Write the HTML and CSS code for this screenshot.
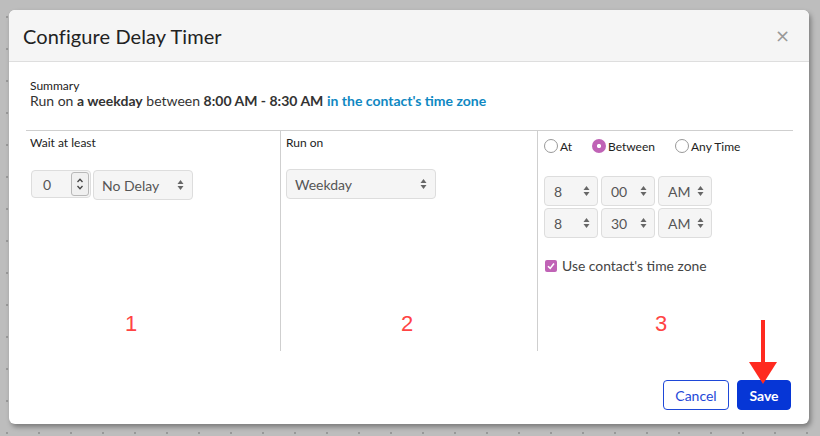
FILE: index.html
```html
<!DOCTYPE html>
<html>
<head>
<meta charset="utf-8">
<link rel="stylesheet" href="styles.css">
</head>
<body>
<div class="modal">
  <div class="modal-header">
    <h1 class="title">Configure Delay Timer</h1>
    <span class="close">×</span>
  </div>
  <div class="modal-body">
    <div class="summary">
      <div class="summary-label">Summary</div>
      <div class="summary-text">Run on <b>a weekday</b> between <b>8:00 AM - 8:30 AM</b> <b class="link">in the contact's time zone</b></div>
    </div>
    <div class="columns">
      <div class="col">
        <div class="col-label">Wait at least</div>
        <div class="controls">
          <div class="num-input">
            <span class="num-val">0</span>
            <span class="spin">
              <svg width="8" height="18" viewBox="0 0 8 18"><path d="M1.5 7 L4 4.2 L6.5 7" fill="none" stroke="#444" stroke-width="1.3"/><path d="M1.5 11 L4 13.8 L6.5 11" fill="none" stroke="#444" stroke-width="1.3"/></svg>
            </span>
          </div>
          <div class="select w-delay"><span>No Delay</span><svg class="arr" width="7" height="12" viewBox="0 0 7 12"><path d="M3.5 1 L6.5 5 H0.5Z M3.5 11 L6.5 7 H0.5Z" fill="#666"/></svg></div>
        </div>
      </div>
      <div class="col">
        <div class="col-label">Run on</div>
        <div class="controls">
          <div class="select w-day"><span>Weekday</span><svg class="arr" width="7" height="12" viewBox="0 0 7 12"><path d="M3.5 1 L6.5 5 H0.5Z M3.5 11 L6.5 7 H0.5Z" fill="#666"/></svg></div>
        </div>
      </div>
      <div class="col">
        <div class="radios">
          <label class="radio"><span class="dot"></span>At</label>
          <label class="radio"><span class="dot on"></span>Between</label>
          <label class="radio"><span class="dot"></span>Any Time</label>
        </div>
        <div class="time-grid">
          <div class="select sm"><span>8</span><svg class="arr" width="7" height="12" viewBox="0 0 7 12"><path d="M3.5 1 L6.5 5 H0.5Z M3.5 11 L6.5 7 H0.5Z" fill="#666"/></svg></div>
          <div class="select sm"><span>00</span><svg class="arr" width="7" height="12" viewBox="0 0 7 12"><path d="M3.5 1 L6.5 5 H0.5Z M3.5 11 L6.5 7 H0.5Z" fill="#666"/></svg></div>
          <div class="select sm"><span>AM</span><svg class="arr" width="7" height="12" viewBox="0 0 7 12"><path d="M3.5 1 L6.5 5 H0.5Z M3.5 11 L6.5 7 H0.5Z" fill="#666"/></svg></div>
          <div class="select sm"><span>8</span><svg class="arr" width="7" height="12" viewBox="0 0 7 12"><path d="M3.5 1 L6.5 5 H0.5Z M3.5 11 L6.5 7 H0.5Z" fill="#666"/></svg></div>
          <div class="select sm"><span>30</span><svg class="arr" width="7" height="12" viewBox="0 0 7 12"><path d="M3.5 1 L6.5 5 H0.5Z M3.5 11 L6.5 7 H0.5Z" fill="#666"/></svg></div>
          <div class="select sm"><span>AM</span><svg class="arr" width="7" height="12" viewBox="0 0 7 12"><path d="M3.5 1 L6.5 5 H0.5Z M3.5 11 L6.5 7 H0.5Z" fill="#666"/></svg></div>
        </div>
        <label class="check"><span class="box"><svg width="10" height="10" viewBox="0 0 10 10"><path d="M2 5.2 L4.2 7.4 L8 2.6" fill="none" stroke="#fff" stroke-width="1.6"/></svg></span>Use contact's time zone</label>
      </div>
    </div>
  </div>
  <div class="modal-footer">
    <button class="btn btn-cancel">Cancel</button>
    <button class="btn btn-save">Save</button>
  </div>
  <span class="anno a1">1</span>
  <span class="anno a2">2</span>
  <span class="anno a3">3</span>
  <svg class="arrow" width="28" height="66" viewBox="0 0 28 66"><rect x="12" y="0" width="4" height="46" fill="#ff2a1f"/><path d="M0 42 H28 L14 64 Z" fill="#ff2a1f"/></svg>
</div>
</body>
</html>
```

FILE: styles.css
```css
html, body {
  margin: 0;
  padding: 0;
}
body {
  width: 820px;
  height: 436px;
  overflow: hidden;
  background-color: #bdbdbd;
  background-image: radial-gradient(circle at 1px 1px, #999 1.2px, transparent 1.4px);
  background-size: 32px 32px;
  background-position: 6px 16px;
  font-family: Lato, "Open Sans", sans-serif;
  color: #333;
  padding-top: 10px;
  padding-left: 9px;
  box-sizing: border-box;
}
.modal {
  position: relative;
  width: 800px;
  height: 414px;
  background: #fff;
  border-radius: 6px;
  box-shadow: 2px 3px 5px rgba(0, 0, 0, 0.35);
  display: flex;
  flex-direction: column;
  overflow: hidden;
}
.modal-header {
  height: 52px;
  flex: none;
  background: #f5f5f5;
  border-bottom: 1px solid #dedede;
  box-sizing: border-box;
  display: flex;
  align-items: center;
  justify-content: space-between;
  padding: 0 19px 0 14px;
}
.title {
  margin: 0;
  font-size: 20px;
  font-weight: 400;
  color: #222;
  letter-spacing: 0.1px;
}
.close {
  font-family: "DejaVu Sans", sans-serif;
  font-size: 18px;
  color: #999;
  line-height: 1;
}
.modal-body {
  padding: 0 16px 0 17px;
}
.summary {
  padding: 16px 0 0 4px;
  height: 68px;
  box-sizing: border-box;
}
.summary-label {
  font-size: 12px;
  line-height: 15px;
  color: #222;
}
.summary-text {
  font-size: 14px;
  line-height: 16px;
  color: #333;
}
.summary-text b {
  font-weight: 700;
  color: #333;
}
.summary-text b.link {
  color: #0f88c2;
}
.columns {
  display: grid;
  grid-template-columns: 255px 257px 255px;
  border-top: 1px solid #cfcfcf;
  height: 220px;
}
.col {
  border-right: 1px solid #cfcfcf;
  padding: 5px 5px 0;
}
.col:last-child {
  border-right: none;
  padding-left: 6px;
  padding-top: 6px;
}
.col:first-child {
  padding-left: 4px;
}
.col-label {
  font-size: 12px;
  line-height: 14px;
  color: #222;
}
.controls {
  display: flex;
  gap: 2px;
  margin-top: 19px;
}
.col:first-child .controls {
  margin-top: 20px;
  padding-left: 1px;
}
.num-input {
  width: 60px;
  height: 28px;
  box-sizing: border-box;
  background: #f5f5f5;
  border: 1px solid #ddd;
  border-radius: 4px;
  display: flex;
  align-items: center;
  justify-content: space-between;
  padding: 0 1px 0 11px;
  font-size: 14px;
  color: #555;
}
.spin {
  width: 18px;
  height: 24px;
  box-sizing: border-box;
  border: 1px solid #b8b8b8;
  border-radius: 3px;
  background: #f0f0f0;
  display: flex;
  align-items: center;
  justify-content: center;
}
.select {
  height: 30px;
  box-sizing: border-box;
  background: #f5f5f5;
  border: 1px solid #ddd;
  border-radius: 4px;
  display: flex;
  align-items: center;
  justify-content: space-between;
  padding: 0 8px 0 8px;
  font-size: 14px;
  color: #555;
}
.w-delay {
  width: 100px;
}
.w-day {
  width: 150px;
}
.radios {
  display: flex;
  align-items: center;
  height: 18px;
  font-size: 12px;
  color: #222;
}
.radio {
  display: flex;
  align-items: center;
  gap: 2px;
}
.radio:nth-child(1) { width: 48px; }
.radio:nth-child(2) { width: 83px; }
.dot {
  width: 14px;
  height: 14px;
  box-sizing: border-box;
  border: 1px solid #999;
  border-radius: 50%;
  background: #fff;
}
.dot.on {
  border: none;
  background: radial-gradient(circle, #fff 0 1.8px, #c063b6 2.4px);
}
.time-grid {
  display: grid;
  grid-template-columns: repeat(3, 54px);
  grid-auto-rows: 30px;
  gap: 2px 3px;
  margin-top: 21px;
}
.select.sm {
  padding: 0 7px 0 9px;
}
.check {
  display: flex;
  align-items: center;
  gap: 5px;
  margin-top: 19px;
  font-size: 13.9px;
  color: #444;
}
.box {
  width: 12px;
  height: 12px;
  border-radius: 2px;
  background: #c063b6;
  display: flex;
  align-items: center;
  justify-content: center;
  margin-left: 1px;
}
.modal-footer {
  flex: 1;
  display: flex;
  justify-content: flex-end;
  align-items: flex-start;
  gap: 8px;
  padding: 29px 18px 0 0;
}
.btn {
  height: 30px;
  box-sizing: border-box;
  border-radius: 4px;
  font-family: Lato, "Open Sans", sans-serif;
  font-size: 14px;
  padding: 0;
}
.btn-cancel {
  width: 66px;
  background: #fff;
  border: 1px solid #1e48d8;
  color: #1e48d8;
}
.btn-save {
  width: 54px;
  background: #0636d6;
  border: 1px solid #0636d6;
  color: #fff;
  font-weight: 700;
}
.anno {
  position: absolute;
  top: 301px;
  font-family: "Liberation Sans", Arial, sans-serif;
  font-size: 22px;
  line-height: 26px;
  color: #ff4444;
}
.a1 { left: 116px; }
.a2 { left: 392px; }
.a3 { left: 646px; }
.arrow {
  position: absolute;
  left: 740px;
  top: 310px;
}
```
